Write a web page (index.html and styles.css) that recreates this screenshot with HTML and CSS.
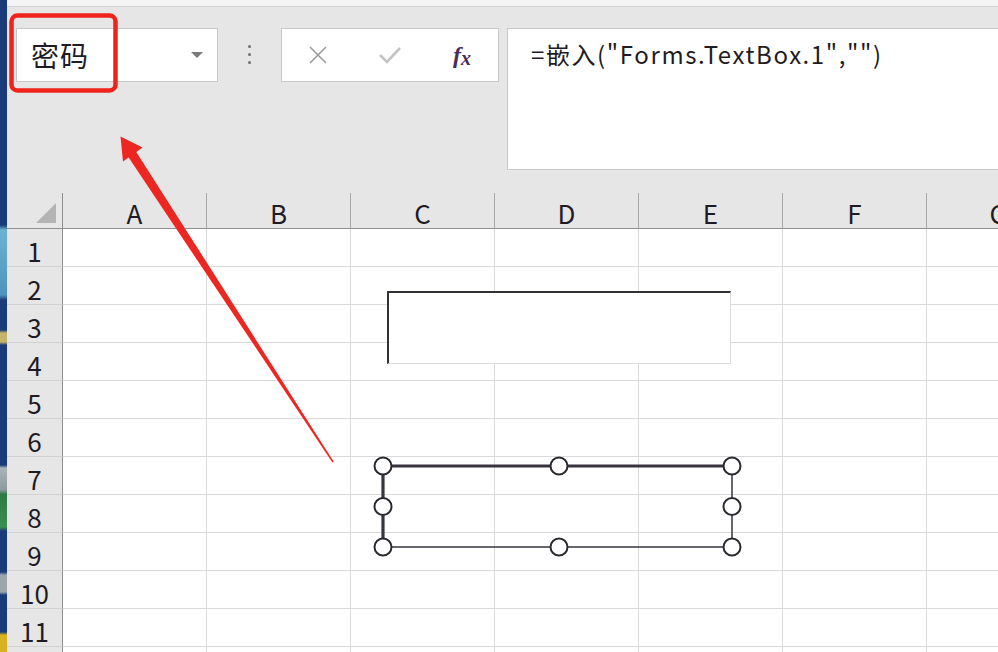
FILE: index.html
```html
<!DOCTYPE html>
<html lang="zh-CN">
  <head>
    <meta charset="UTF-8" />
    <title>密码</title>
    <link rel="stylesheet" href="styles.css">
  </head>
  <body>
    <div class="app">
      <div class="desktop"></div>
      <div class="excel">
        <div class="titlebar"></div>

        <!-- 编辑栏 -->
        <div class="formula-bar">
          <div class="name-box">
            <span>密码</span>
            <i class="caret"></i>
          </div>
          <div class="more"><span></span><span></span><span></span></div>
          <div class="buttons">
            <span class="btn">
              <svg width="20" height="20" viewBox="0 0 20 20"><path d="M2 2 L18 18 M18 2 L2 18" stroke="#9a9a9a" stroke-width="1.6" fill="none"/></svg>
            </span>
            <span class="btn">
              <svg width="24" height="20" viewBox="0 0 24 20"><path d="M2 10 L9 17 L22 3" stroke="#c4c4c4" stroke-width="2.6" fill="none"/></svg>
            </span>
            <span class="btn fx"><i>f</i><i class="x">x</i></span>
          </div>
          <div class="formula">=嵌入("Forms.TextBox.1","")</div>
        </div>

        <!-- 工作表 -->
        <div class="sheet">
          <div class="corner"><i></i></div>
          <div class="h">A</div><div class="h">B</div><div class="h">C</div><div class="h">D</div><div class="h">E</div><div class="h">F</div><div class="h">G</div>

          <div class="r">1</div><div class="c"></div><div class="c"></div><div class="c"></div><div class="c"></div><div class="c"></div><div class="c"></div><div class="c"></div>
          <div class="r">2</div><div class="c"></div><div class="c"></div><div class="c"></div><div class="c"></div><div class="c"></div><div class="c"></div><div class="c"></div>
          <div class="r">3</div><div class="c"></div><div class="c"></div><div class="c"></div><div class="c"></div><div class="c"></div><div class="c"></div><div class="c"></div>
          <div class="r">4</div><div class="c"></div><div class="c"></div><div class="c"></div><div class="c"></div><div class="c"></div><div class="c"></div><div class="c"></div>
          <div class="r">5</div><div class="c"></div><div class="c"></div><div class="c"></div><div class="c"></div><div class="c"></div><div class="c"></div><div class="c"></div>
          <div class="r">6</div><div class="c"></div><div class="c"></div><div class="c"></div><div class="c"></div><div class="c"></div><div class="c"></div><div class="c"></div>
          <div class="r">7</div><div class="c"></div><div class="c"></div><div class="c"></div><div class="c"></div><div class="c"></div><div class="c"></div><div class="c"></div>
          <div class="r">8</div><div class="c"></div><div class="c"></div><div class="c"></div><div class="c"></div><div class="c"></div><div class="c"></div><div class="c"></div>
          <div class="r">9</div><div class="c"></div><div class="c"></div><div class="c"></div><div class="c"></div><div class="c"></div><div class="c"></div><div class="c"></div>
          <div class="r">10</div><div class="c"></div><div class="c"></div><div class="c"></div><div class="c"></div><div class="c"></div><div class="c"></div><div class="c"></div>
          <div class="r">11</div><div class="c"></div><div class="c"></div><div class="c"></div><div class="c"></div><div class="c"></div><div class="c"></div><div class="c"></div>
          <div class="r"></div><div class="c"></div><div class="c"></div><div class="c"></div><div class="c"></div><div class="c"></div><div class="c"></div><div class="c"></div>

          <!-- 文本框控件 -->
          <div class="textbox"></div>
          <svg class="textbox-sel" width="370" height="102" viewBox="0 0 370 102">
            <path d="M10 10 H359" stroke="#3a3440" stroke-width="3.2" fill="none"/>
            <path d="M10 10 V91" stroke="#3a3440" stroke-width="3.2" fill="none"/>
            <path d="M10 91 H359 V10" stroke="#3a3440" stroke-width="1.5" fill="none"/>
            <g fill="#fff" stroke="#2c2830" stroke-width="2">
              <circle cx="10" cy="10" r="8.5"/>
              <circle cx="186" cy="10" r="8.5"/>
              <circle cx="359" cy="10" r="8.5"/>
              <circle cx="10" cy="50.5" r="8.5"/>
              <circle cx="359" cy="50.5" r="8.5"/>
              <circle cx="10" cy="91" r="8.5"/>
              <circle cx="186" cy="91" r="8.5"/>
              <circle cx="359" cy="91" r="8.5"/>
            </g>
          </svg>
        </div>
      </div>
    </div>

    <!-- 标注 -->
    <svg class="marks" width="998" height="652" viewBox="0 0 998 652">
      <rect x="11.5" y="15.5" width="104" height="75" rx="6" fill="none" stroke="#f0231c" stroke-width="4.5"/>
      <polygon points="126,153.6 134,148.4 333.6,461.6 332.4,462.4" fill="#ec2620"/>
      <polygon points="120.5,136.5 142.5,147.5 123,161.5" fill="#ec2620"/>
    </svg>
  </body>
</html>
```

FILE: styles.css
```css
* {
  margin: 0;
  padding: 0;
  box-sizing: border-box;
}

body {
  position: relative;
  width: 998px;
  height: 652px;
  overflow: hidden;
  background: #e6e6e6;
  color: #1f1b24;
  font-family: "Noto Sans CJK SC", "Noto Sans", sans-serif;
}

.app {
  display: flex;
  height: 652px;
}

.desktop {
  flex: none;
  width: 7px;
  background: linear-gradient(
    to bottom,
    #1a3b7a 0,
    #1a3b7a 225px,
    #6cb3d2 230px,
    #4d93bd 295px,
    #1a3b7a 300px,
    #1a3b7a 330px,
    #c7b46c 333px,
    #c7b46c 342px,
    #1a3b7a 345px,
    #1a3b7a 465px,
    #a9b4b8 468px,
    #8c9aa0 490px,
    #2f7a45 494px,
    #3c8e52 527px,
    #1a3b7a 531px,
    #1a3b7a 572px,
    #9aa6ac 575px,
    #9aa6ac 592px,
    #1a3b7a 595px,
    #1a3b7a 632px,
    #d9b21f 635px
  );
}

.excel {
  flex: 1;
  min-width: 0;
  display: flex;
  flex-direction: column;
  overflow: hidden;
}

.titlebar {
  flex: none;
  height: 7px;
  background: #f4f4f4;
  border-bottom: 1px solid #d3d3d3;
}

/* 编辑栏 */
.formula-bar {
  flex: none;
  height: 186px;
  display: flex;
  align-items: flex-start;
  padding: 21px 0 0 9px;
}

.name-box {
  flex: none;
  width: 202px;
  height: 54px;
  display: flex;
  align-items: center;
  padding-left: 14px;
  background: #fff;
  border: 1px solid #c9c9c9;
  font-size: 28px;
  letter-spacing: 1px;
}

.name-box .caret {
  margin-left: auto;
  margin-right: 14px;
  border-left: 6px solid transparent;
  border-right: 6px solid transparent;
  border-top: 6px solid #7a7a7a;
}

.more {
  flex: none;
  width: 63px;
  display: flex;
  flex-direction: column;
  align-items: center;
  gap: 5px;
  padding-top: 17px;
}

.more span {
  width: 3px;
  height: 3px;
  border-radius: 50%;
  background: #6f6f6f;
}

.buttons {
  flex: none;
  width: 218px;
  height: 54px;
  display: flex;
  align-items: center;
  background: #fff;
  border: 1px solid #c9c9c9;
}

.btn {
  width: 72px;
  display: flex;
  justify-content: center;
  align-items: center;
}

.fx {
  font-family: "Liberation Serif", serif;
  font-style: italic;
  font-weight: bold;
  font-size: 24px;
  color: #4a2c5c;
}

.fx i {
  font-style: italic;
}

.fx .x {
  font-size: 20px;
  margin-top: 6px;
}

.formula {
  flex: 1;
  height: 142px;
  margin-left: 8px;
  padding: 8px 0 0 23px;
  background: #fff;
  border: 1px solid #c9c9c9;
  border-right: 0;
  font-size: 24px;
  line-height: 34px;
  letter-spacing: 1.6px;
  white-space: nowrap;
}

/* 工作表 */
.sheet {
  position: relative;
  flex: 1;
  display: grid;
  grid-template-columns: 56px repeat(7, 144px);
  grid-template-rows: 36px;
  grid-auto-rows: 38px;
  overflow: hidden;
}

.corner,
.h,
.r {
  background: #e6e6e6;
}

.corner {
  position: relative;
  border-right: 1px solid #8f8f8f;
  border-bottom: 1px solid #8f8f8f;
}

.corner i {
  position: absolute;
  right: 6px;
  bottom: 5px;
  width: 20px;
  height: 20px;
  background: #b4b4b4;
  clip-path: polygon(100% 0, 100% 100%, 0 100%);
}

.h {
  display: flex;
  align-items: center;
  justify-content: center;
  padding-top: 3px;
  border-right: 1px solid #a9a9a9;
  border-bottom: 1px solid #8f8f8f;
  font-size: 26px;
}

.r {
  display: flex;
  align-items: center;
  justify-content: center;
  padding-top: 6px;
  border-right: 1px solid #8f8f8f;
  border-bottom: 1px solid #d2d2d2;
  font-size: 26px;
}

.c {
  background: #fff;
  border-right: 1px solid #d9d9d9;
  border-bottom: 1px solid #d9d9d9;
}

.textbox {
  position: absolute;
  left: 380px;
  top: 98px;
  width: 344px;
  height: 73px;
  background: #fff;
  border-top: 2px solid #34303a;
  border-left: 2px solid #34303a;
  border-right: 1px solid #dcdcdc;
  border-bottom: 1px solid #dcdcdc;
}

.textbox-sel {
  position: absolute;
  left: 366px;
  top: 263px;
}

.marks {
  position: absolute;
  left: 0;
  top: 0;
  pointer-events: none;
}
```
